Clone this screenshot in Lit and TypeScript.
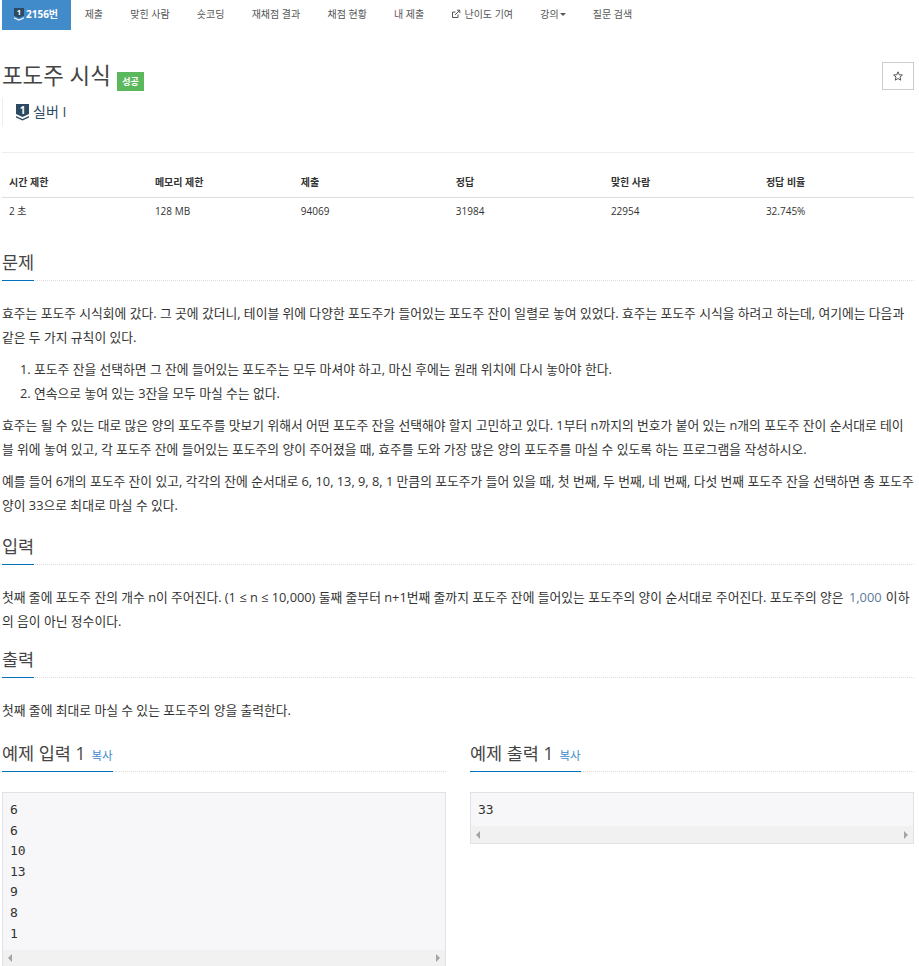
import { LitElement, html, css } from 'lit';

const shield = (w: number, chevron: string) => html`
    <svg class="shield" width="${w}" height="${(w * 16.5) / 13}" viewBox="0 0 13 16.5">
        <path d="M0 0H13V10L6.500 13 0 10z" fill="#2d4a63"></path>
        <path d="M0 12L6.500 15 13 12V13.500L6.500 16.500 0 13.500z" fill="${chevron}"></path>
        <text x="6.500" y="9.500" text-anchor="middle" font-size="10" font-weight="700" fill="#fff" font-family="'Open Sans', sans-serif">1</text>
    </svg>
`;

const scrollbar = html`
    <div class="scrollbar">
        <span class="arrow left"></span>
        <span class="arrow right"></span>
    </div>
`;

export class AppRoot extends LitElement {
    static styles = css`
        :host {
            display: block;
            height: 966px;
            overflow: hidden;
            background: #fff;
            color: #333;
            font-family: "Open Sans", "Noto Sans CJK KR", sans-serif;
            font-size: 12.8px;
            line-height: 24px;
        }
        .page { padding: 0 5px 0 2px; }
        .tabs { display: flex; height: 30px; font-size: 10px; color: #555; }
        .tab { display: flex; align-items: center; gap: 3px; padding: 0 13.6px 2px; white-space: nowrap; }
        .tab.active { background: #428bca; color: #fff; font-weight: 700; padding: 0 13px 2px 12px; gap: 2px; }
        .tab .shield { margin-top: 1px; }
        .shield { overflow: visible; }
        .caret { width: 0; height: 0; border: 3px solid transparent; border-top-color: #555; border-bottom: 0; margin-left: -2px; }
        .title-row { display: flex; justify-content: space-between; align-items: flex-start; margin-top: 32px; }
        .title { display: flex; align-items: flex-start; gap: 6px; font-size: 22.4px; line-height: 27px; font-weight: 400; margin: 0; color: #454545; }
        .label { background: #5cb85c; color: #fff; font-size: 9px; font-weight: 700; line-height: 19px; height: 19px; padding: 0 5.500px; margin-top: 10px; }
        .star { width: 32px; height: 28px; border: 1px solid #ccc; box-sizing: border-box; display: flex; align-items: center; justify-content: center; }
        .tier { display: flex; align-items: center; gap: 4px; height: 28px; margin-top: 7px; padding-left: 13px; border-left: 1px solid #eee; font-size: 14px; color: #2d4a63; }
        .rule { border-top: 1px solid #eee; margin-top: 26px; }
        table { width: 100%; border-collapse: collapse; table-layout: fixed; margin-top: 16px; font-size: 10px; }
        th { text-align: left; font-weight: 700; padding: 1px 7px 3px; border-bottom: 1px solid #ddd; line-height: 24px; }
        td { padding: 0 7px 3px; line-height: 26px; }
        .section { margin-top: 9px; border-bottom: 1px dotted #ddd; height: 35px; display: flex; }
        .section.first { margin-top: 18px; }
        .section.wide { margin-top: 12px; }
        .section.flush { margin-top: 0; }
        .section h2 { margin: 0; font-size: 17.500px; line-height: 34px; font-weight: 400; border-bottom: 1px solid #0072bc; height: 35px; color: #454545; white-space: nowrap; }
        p { margin: 0 0 8px; }
        .body { margin-top: 20px; }
        ol { margin: 0 0 8px; padding-left: 32px; }
        .blue { color: #5a7a9a; margin: 0 1px 0 2px; }
        .samples { display: grid; grid-template-columns: 1fr 1fr; gap: 24px; margin-top: 14px; }
        .copy { font-size: 11.500px; color: #428bca; margin-left: 6px; }
        .box { margin-top: 20px; border: 1px solid #e1e1e8; background: #f7f7f9; }
        .code { padding: 7px 7px 5.800px; font-family: "DejaVu Sans Mono", monospace; font-size: 13px; line-height: 20.600px; color: #333; white-space: pre; }
        .scrollbar { height: 17px; background: #f1f1f1; display: flex; justify-content: space-between; align-items: center; padding: 0 5px; }
        .arrow { width: 0; height: 0; border: 4px solid transparent; }
        .arrow.left { border-right-color: #a3a3a3; border-left: 0; }
        .arrow.right { border-left-color: #a3a3a3; border-right: 0; }
    `;

    render() {
        const cols = [16, 16, 17, 17, 17, 17];
        const heads = ['시간 제한', '메모리 제한', '제출', '정답', '맞힌 사람', '정답 비율'];
        const vals = ['2 초', '128 MB', '94069', '31984', '22954', '32.745%'];
        return html`
            <div class="page">
                <nav class="tabs">
                    <div class="tab active">${shield(10, '#f2f6fa')}<span>2156번</span></div>
                    <div class="tab">제출</div>
                    <div class="tab">맞힌 사람</div>
                    <div class="tab">숏코딩</div>
                    <div class="tab">재채점 결과</div>
                    <div class="tab">채점 현황</div>
                    <div class="tab">내 제출</div>
                    <div class="tab">
                        <svg width="10" height="10" viewBox="0 0 10 10" fill="none" stroke="#555" stroke-width="1">
                            <path d="M7 5.500V8.500H1.500V3H4.500M4 6L8.500 1.500M6 1.200H8.800V4"></path>
                        </svg>
                        <span>난이도 기여</span>
                    </div>
                    <div class="tab">강의<span class="caret"></span></div>
                    <div class="tab">질문 검색</div>
                </nav>
                <div class="title-row">
                    <h1 class="title">포도주 시식 <span class="label">성공</span></h1>
                    <div class="star">
                        <svg width="10" height="10" viewBox="0 0 24 24" fill="none" stroke="#333" stroke-width="2">
                            <path d="M12 2l3 7 7.500.6-5.700 4.900 1.800 7.500L12 18l-6.600 4 1.800-7.500L1.500 9.600 9 9z"></path>
                        </svg>
                    </div>
                </div>
                <div class="tier">${shield(13, '#2d4a63')}<span>실버 I</span></div>
                <div class="rule"></div>
                <table>
                    <colgroup>${cols.map((w) => html`<col style="width:${w}%" />`)}</colgroup>
                    <thead><tr>${heads.map((h) => html`<th>${h}</th>`)}</tr></thead>
                    <tbody><tr>${vals.map((v) => html`<td>${v}</td>`)}</tr></tbody>
                </table>
                <div class="section first"><h2>문제</h2></div>
                <div class="body">
                    <p>효주는 포도주 시식회에 갔다. 그 곳에 갔더니, 테이블 위에 다양한 포도주가 들어있는 포도주 잔이 일렬로 놓여 있었다. 효주는 포도주 시식을 하려고 하는데, 여기에는 다음과 같은 두 가지 규칙이 있다.</p>
                    <ol>
                        <li>포도주 잔을 선택하면 그 잔에 들어있는 포도주는 모두 마셔야 하고, 마신 후에는 원래 위치에 다시 놓아야 한다.</li>
                        <li>연속으로 놓여 있는 3잔을 모두 마실 수는 없다.</li>
                    </ol>
                    <p>효주는 될 수 있는 대로 많은 양의 포도주를 맛보기 위해서 어떤 포도주 잔을 선택해야 할지 고민하고 있다. 1부터 n까지의 번호가 붙어 있는 n개의 포도주 잔이 순서대로 테이블 위에 놓여 있고, 각 포도주 잔에 들어있는 포도주의 양이 주어졌을 때, 효주를 도와 가장 많은 양의 포도주를 마실 수 있도록 하는 프로그램을 작성하시오.</p>
                    <p>예를 들어 6개의 포도주 잔이 있고, 각각의 잔에 순서대로 6, 10, 13, 9, 8, 1 만큼의 포도주가 들어 있을 때, 첫 번째, 두 번째, 네 번째, 다섯 번째 포도주 잔을 선택하면 총 포도주 양이 33으로 최대로 마실 수 있다.</p>
                </div>
                <div class="section wide"><h2>입력</h2></div>
                <div class="body">
                    <p>첫째 줄에 포도주 잔의 개수 n이 주어진다. (1 ≤ n ≤ 10,000) 둘째 줄부터 n+1번째 줄까지 포도주 잔에 들어있는 포도주의 양이 순서대로 주어진다. 포도주의 양은 <span class="blue">1,000</span> 이하의 음이 아닌 정수이다.</p>
                </div>
                <div class="section"><h2>출력</h2></div>
                <div class="body">
                    <p>첫째 줄에 최대로 마실 수 있는 포도주의 양을 출력한다.</p>
                </div>
                <div class="samples">
                    <div>
                        <div class="section flush"><h2>예제 입력 1<span class="copy">복사</span></h2></div>
                        <div class="box"><div class="code">6
6
10
13
9
8
1</div>${scrollbar}</div>
                    </div>
                    <div>
                        <div class="section flush"><h2>예제 출력 1<span class="copy">복사</span></h2></div>
                        <div class="box"><div class="code">33</div>${scrollbar}</div>
                    </div>
                </div>
            </div>
        `;
    }
}

customElements.define('app-root', AppRoot);
